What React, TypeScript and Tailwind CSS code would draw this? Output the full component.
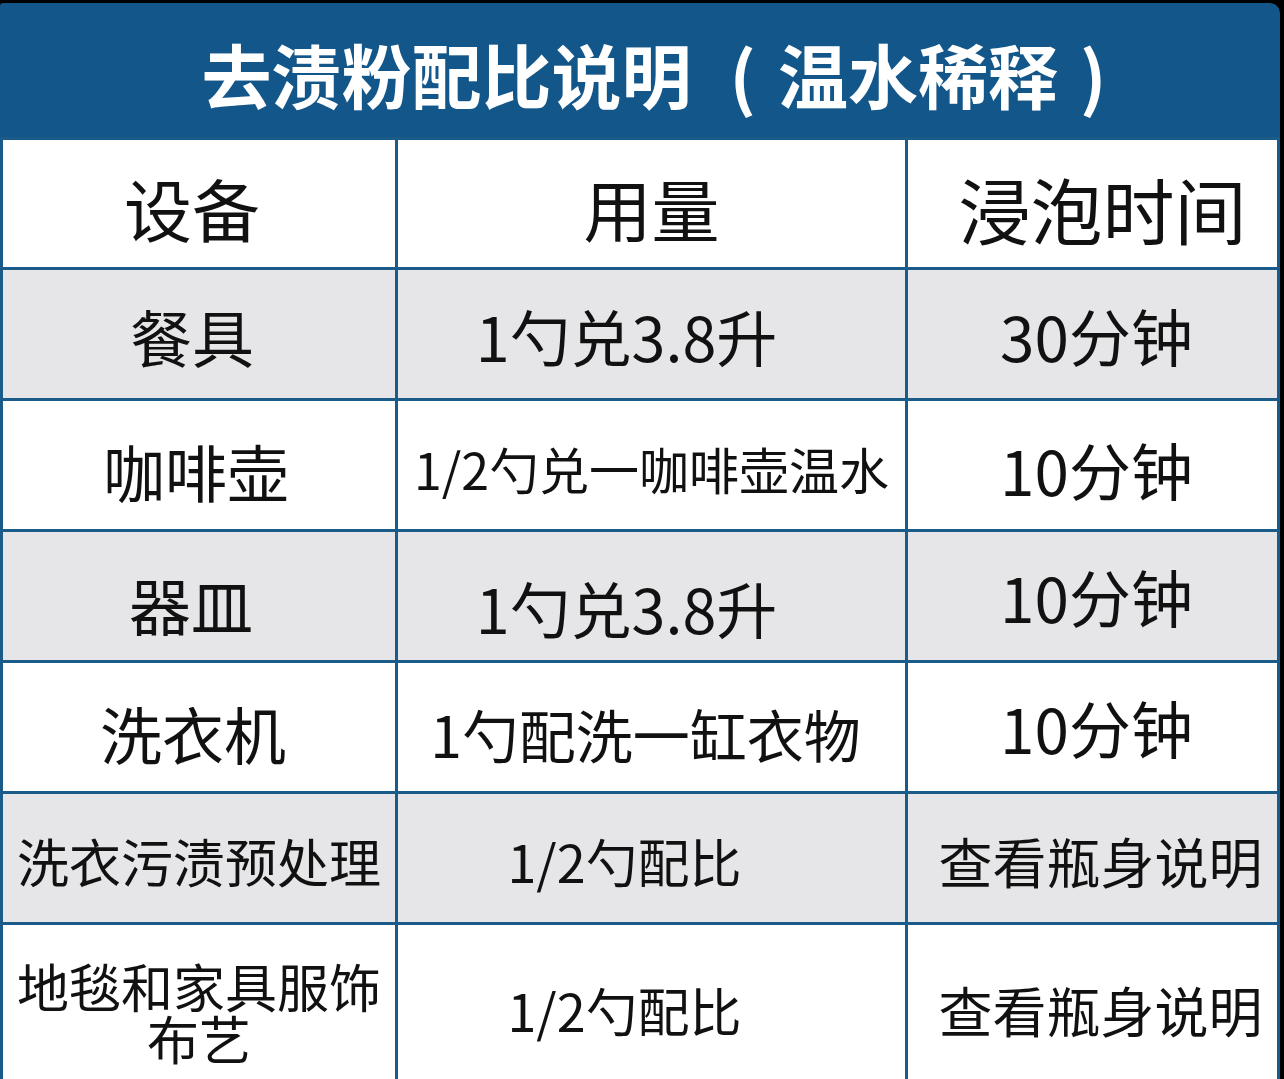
import React from "react";

const font = { fontFamily: '"Noto Sans CJK SC", "Noto Sans", sans-serif' };

type Cell = { text: React.ReactNode; cls: string };
type Row = { bg: string; h: string; cells: Cell[] };

const rows: Row[] = [
  {
    bg: "bg-white",
    h: "h-[127px]",
    cells: [
      { text: "设备", cls: "text-[68px] pr-[14px] pt-[8px]" },
      { text: "用量", cls: "text-[68px] pr-[0px] pt-[8px]" },
      { text: "浸泡时间", cls: "text-[72px] pl-[20px] pt-[8px]" },
    ],
  },
  {
    bg: "bg-[#e6e6e8]",
    h: "h-[128px]",
    cells: [
      { text: "餐具", cls: "text-[62px] pr-[14px] pt-[4px]" },
      { text: "1勺兑3.8升", cls: "text-[61px] pr-[50px] pt-[2px]" },
      { text: "30分钟", cls: "text-[62px] pl-[8px] pt-[2px]" },
    ],
  },
  {
    bg: "bg-white",
    h: "h-[128px]",
    cells: [
      { text: "咖啡壶", cls: "text-[62px] pr-[6px] pt-[12px]" },
      { text: "1/2勺兑一咖啡壶温水", cls: "text-[50px] pt-[6px]" },
      { text: "10分钟", cls: "text-[62px] pl-[8px] pt-[8px]" },
    ],
  },
  {
    bg: "bg-[#e6e6e8]",
    h: "h-[128px]",
    cells: [
      { text: "器皿", cls: "text-[62px] pr-[16px] pt-[16px]" },
      { text: "1勺兑3.8升", cls: "text-[61px] pr-[50px] pt-[22px]" },
      { text: "10分钟", cls: "text-[62px] pl-[8px] pt-[0px]" },
    ],
  },
  {
    bg: "bg-white",
    h: "h-[128px]",
    cells: [
      { text: "洗衣机", cls: "text-[62px] pr-[12px] pt-[12px]" },
      { text: "1勺配洗一缸衣物", cls: "text-[57px] pr-[12px] pt-[12px]" },
      { text: "10分钟", cls: "text-[62px] pl-[8px] pt-[0px]" },
    ],
  },
  {
    bg: "bg-[#e6e6e8]",
    h: "h-[128px]",
    cells: [
      { text: "洗衣污渍预处理", cls: "text-[52px] pt-[6px]" },
      { text: "1/2勺配比", cls: "text-[52px] pr-[54px] pt-[6px]" },
      { text: "查看瓶身说明", cls: "text-[54px] pl-[16px] pt-[6px]" },
    ],
  },
  {
    bg: "bg-white",
    h: "h-[170px]",
    cells: [
      {
        text: (
          <>
            地毯和家具服饰
            <br />
            布艺
          </>
        ),
        cls: "text-[52px] leading-[70px] pt-[4px]",
      },
      { text: "1/2勺配比", cls: "text-[52px] pr-[54px] pt-[0px]" },
      { text: "查看瓶身说明", cls: "text-[54px] pl-[16px] pt-[0px]" },
    ],
  },
];

export default function App() {
  return (
    <div className="w-[1284px] h-[1079px] bg-black overflow-hidden pt-[3px]" style={font}>
      <div className="w-[1280px] bg-[#135689] rounded-tr-[10px] rounded-tl-[3px] overflow-hidden">
        <div className="h-[134px] flex items-center justify-center pl-[28px] pt-[8px] text-white font-bold text-[70px] leading-none">
          <span>去渍粉配比说明</span>
          <span className="ml-[38px] mr-[22px] font-semibold">(</span>
          <span>温水稀释</span>
          <span className="ml-[22px] font-semibold">)</span>
        </div>
        <div className="grid grid-cols-[392px_507px_369px] gap-[3px] px-[3px] pt-[3px] bg-[#1a5b8a]">
          {rows.map((r, i) =>
            r.cells.map((c, j) => (
              <div
                key={`${i}-${j}`}
                className={`${r.bg} ${r.h} flex items-center justify-center text-center text-[#111] leading-none whitespace-nowrap ${c.cls}`}
              >
                <div>{c.text}</div>
              </div>
            ))
          )}
        </div>
      </div>
    </div>
  );
}
